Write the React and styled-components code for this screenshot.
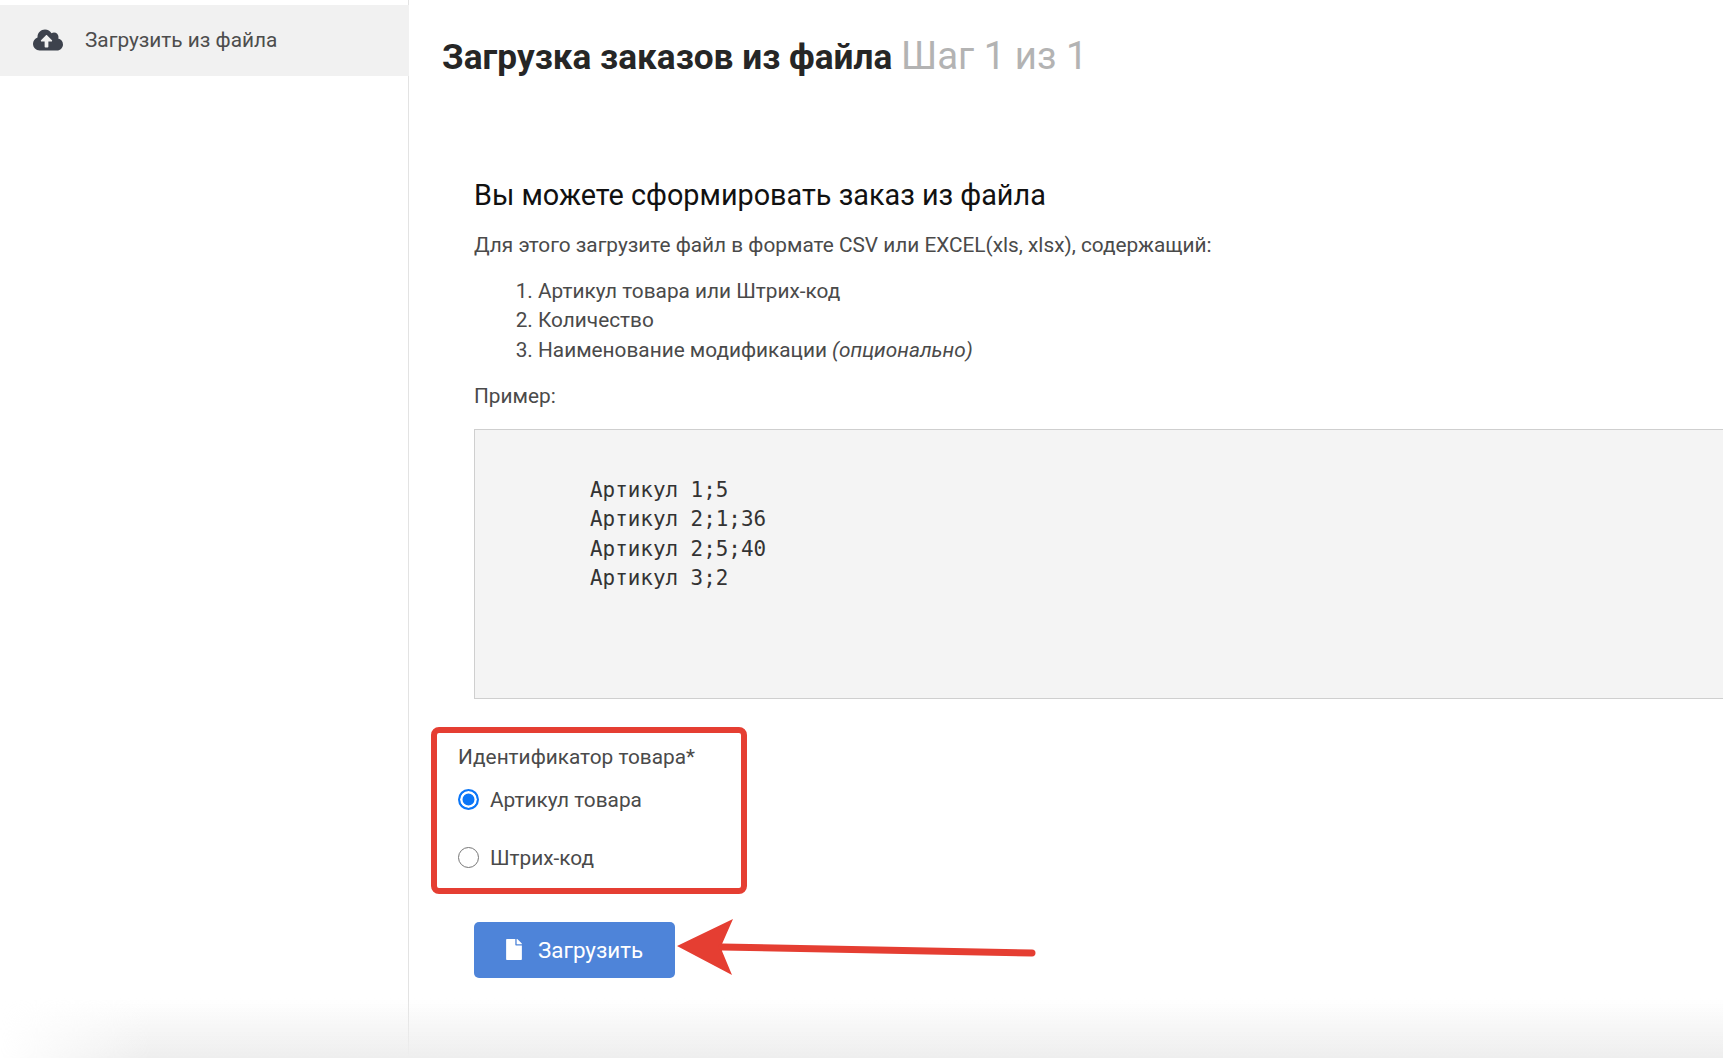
import React from "react";
import styled, { createGlobalStyle } from "styled-components";
import { FaCloudUploadAlt, FaFile } from "react-icons/fa";

const GlobalStyle = createGlobalStyle`
	html, body {
		margin: 0;
		padding: 0;
		height: 100%;
		overflow: hidden;
		background: #fff;
	}
	body {
		font-family: Roboto, "Liberation Sans", sans-serif;
		color: #4a4a4a;
	}
`;

const Page = styled.div`
	position: relative;
	display: flex;
	width: 1723px;
	height: 1058px;
	overflow: hidden;
`;

const Sidebar = styled.aside`
	flex: 0 0 409px;
	box-sizing: border-box;
	padding-top: 5px;
	border-right: 1px solid #e3e3e3;
`;

const NavItem = styled.div`
	display: flex;
	align-items: center;
	box-sizing: border-box;
	height: 71px;
	margin-right: -1px;
	padding: 0 0 2px 33px;
	background: #f1f1f1;
	font-size: 20.8px;
	color: #4d4d4d;

	svg {
		width: 30px;
		height: 24px;
		margin-right: 22px;
		color: #3d424d;
	}
`;

const Main = styled.main`
	flex: 1;
	min-width: 0;
	padding: 33px 0 0 33px;
`;

const Title = styled.h1`
	margin: 0;
	font-size: 35.2px;
	line-height: 46px;
	font-weight: 700;
	color: #262626;
	white-space: nowrap;
`;

const Step = styled.span`
	font-size: 38.4px;
	font-weight: 400;
	color: #b3b3b3;
`;

const Content = styled.div`
	padding: 97px 0 0 32px;
`;

const Heading = styled.h2`
	margin: 0 0 18px;
	font-size: 28.8px;
	line-height: 36px;
	font-weight: 400;
	color: #111;
`;

const Text = styled.p`
	margin: 0 0 ${props => props.$gap || 16}px;
	font-size: 20.8px;
	line-height: 29.5px;
`;

const Steps = styled.ol`
	margin: 0 0 17px;
	padding-left: 64px;
	font-size: 20.8px;
	line-height: 29.5px;
`;

const Example = styled.pre`
	box-sizing: border-box;
	width: 1400px;
	height: 270px;
	margin: 0 0 28px;
	padding: 46px 0 0 115px;
	background: #f4f4f4;
	border: 1px solid #cfcfcf;
	font-family: "DejaVu Sans Mono", "Liberation Mono", monospace;
	font-size: 20.9px;
	line-height: 29.6px;
	color: #333;
`;

const IdentifierBox = styled.div`
	box-sizing: border-box;
	width: 316px;
	height: 167px;
	margin-left: -43px;
	padding: 9px 0 0 21px;
	border: 6px solid #e53e32;
	border-radius: 8px;
	font-size: 20.8px;
`;

const FieldLabel = styled.div`
	line-height: 30px;
	margin-bottom: 13px;
`;

const RadioRow = styled.label`
	display: flex;
	align-items: center;
	gap: 11px;
	height: 30px;
	margin-bottom: 28px;
`;

const Radio = styled.span`
	box-sizing: border-box;
	width: 21px;
	height: 21px;
	border-radius: 50%;
	border: ${props => (props.$checked ? "2px solid #0b76f7" : "1.5px solid #767676")};
	background: ${props => (props.$checked ? "#0b76f7" : "#fff")};
	box-shadow: ${props => (props.$checked ? "inset 0 0 0 2.5px #fff" : "none")};
`;

const UploadButton = styled.button`
	display: flex;
	align-items: center;
	width: 201px;
	height: 56px;
	margin-top: 28px;
	padding: 0 0 0 32px;
	border: 0;
	border-radius: 5px;
	background: #4e84d9;
	color: #fff;
	font-family: inherit;
	font-size: 22.4px;

	svg {
		width: 16px;
		height: 21px;
		margin-right: 16px;
	}
`;

// annotation drawn over the screenshot
const Arrow = styled.svg`
	position: absolute;
	left: 670px;
	top: 911px;
`;

const BottomShade = styled.div`
	position: absolute;
	left: 0;
	right: 0;
	bottom: 0;
	height: 60px;
	background: linear-gradient(to bottom, rgba(238, 238, 238, 0), #eeeeee);
	mask-image: linear-gradient(to right, transparent 0, #000 150px);
	pointer-events: none;
`;

export default function App() {
	return (
		<Page>
			<GlobalStyle />
			<Sidebar>
				<NavItem>
					<FaCloudUploadAlt />
					Загрузить из файла
				</NavItem>
			</Sidebar>
			<Main>
				<Title>
					Загрузка заказов из файла <Step>Шаг 1 из 1</Step>
				</Title>
				<Content>
					<Heading>Вы можете сформировать заказ из файла</Heading>
					<Text>Для этого загрузите файл в формате CSV или EXCEL(xls, xlsx), содержащий:</Text>
					<Steps>
						<li>Артикул товара или Штрих-код</li>
						<li>Количество</li>
						<li>
							Наименование модификации <em>(опционально)</em>
						</li>
					</Steps>
					<Text $gap={17}>Пример:</Text>
					<Example>{"Артикул 1;5\nАртикул 2;1;36\nАртикул 2;5;40\nАртикул 3;2"}</Example>
					<IdentifierBox>
						<FieldLabel>Идентификатор товара*</FieldLabel>
						<RadioRow>
							<Radio $checked />
							Артикул товара
						</RadioRow>
						<RadioRow>
							<Radio />
							Штрих-код
						</RadioRow>
					</IdentifierBox>
					<UploadButton>
						<FaFile />
						Загрузить
					</UploadButton>
				</Content>
			</Main>
			<Arrow width="370" height="70" viewBox="0 0 370 70">
				<path d="M7 35 L63 8 L52 33 L52 40 L62 64 Z" fill="#e53e32" />
				<path d="M52 36 L362 42" stroke="#e53e32" strokeWidth="7" strokeLinecap="round" fill="none" />
			</Arrow>
			<BottomShade />
		</Page>
	);
}
